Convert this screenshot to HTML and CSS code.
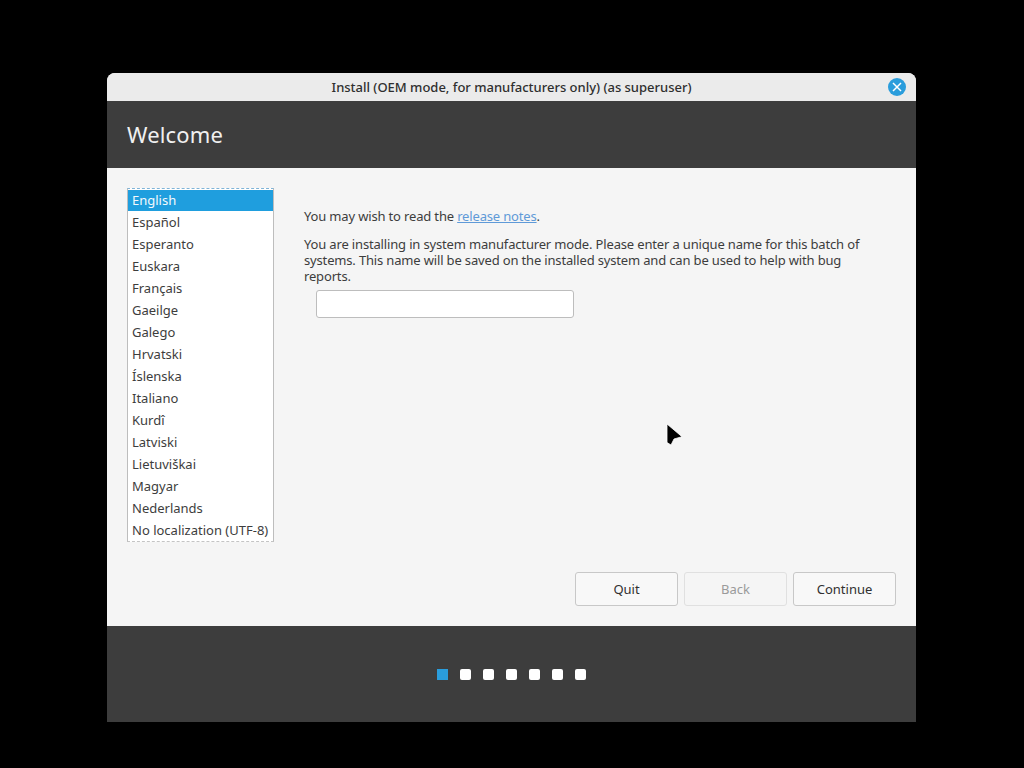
FILE: index.html
```html
<!DOCTYPE html>
<html lang="en">
<head>
<meta charset="utf-8">
<title>Install</title>
<link rel="stylesheet" href="styles.css">
</head>
<body>
<div class="window">
  <div class="titlebar">
    <span class="title">Install (OEM mode, for manufacturers only) (as superuser)</span>
    <span class="close"><svg width="10" height="10" viewBox="0 0 10 10"><path d="M1 1L9 9M9 1L1 9" stroke="#fff" stroke-width="1.5" fill="none"/></svg></span>
  </div>
  <header class="header"><h1>Welcome</h1></header>
  <main class="body">
    <div class="top">
      <ul class="langs">
        <li class="sel">English</li>
        <li>Español</li>
        <li>Esperanto</li>
        <li>Euskara</li>
        <li>Français</li>
        <li>Gaeilge</li>
        <li>Galego</li>
        <li>Hrvatski</li>
        <li>Íslenska</li>
        <li>Italiano</li>
        <li>Kurdî</li>
        <li>Latviski</li>
        <li>Lietuviškai</li>
        <li>Magyar</li>
        <li>Nederlands</li>
        <li>No localization (UTF-8)</li>
      </ul>
      <div class="content">
        <p class="notes">You may wish to read the <a href="#">release notes</a>.</p>
        <p class="desc">You are installing in system manufacturer mode. Please enter a unique name for this batch of systems. This name will be saved on the installed system and can be used to help with bug reports.</p>
        <input class="batch" type="text" aria-label="Batch name">
      </div>
    </div>
    <div class="actions">
      <button class="btn quit">Quit</button>
      <button class="btn back" disabled>Back</button>
      <button class="btn cont">Continue</button>
    </div>
  </main>
  <footer class="footer">
    <span class="dot on"></span><span class="dot"></span><span class="dot"></span><span class="dot"></span><span class="dot"></span><span class="dot"></span><span class="dot"></span>
  </footer>
</div>
<svg class="cursor" width="18" height="25" viewBox="0 0 18 25"><path d="M1 2L16 14.7L8 17L5 23L1 20.5Z" fill="#000" stroke="#fff" stroke-width="0.8"/></svg>
</body>
</html>
```
FILE: styles.css
```css
* { box-sizing: border-box; }
html, body { margin: 0; height: 100%; }
body {
  background: #000;
  font-family: "Noto Sans", "DejaVu Sans", sans-serif;
  font-size: 13px;
  color: #3d3d3d;
  padding: 73px 108px 46px 107px;
  overflow: hidden;
}
.window { width: 809px; height: 649px; display: flex; flex-direction: column; background: #f5f5f5; border-radius: 8px 8px 0 0; overflow: hidden; }
.titlebar { height: 28px; flex: none; background: #ebebeb; display: flex; align-items: center; justify-content: center; position: relative; }
.title { font-size: 13px; font-weight: 500; color: #2f2f2f; letter-spacing: -0.01px; }
.close { position: absolute; right: 10px; top: 5px; width: 18px; height: 18px; border-radius: 50%; background: #2a9ddc; display: flex; align-items: center; justify-content: center; }
.header { height: 67px; flex: none; background: #3d3d3d; display: flex; align-items: center; padding: 0 20px 2px; }
.header h1 { margin: 0; font-size: 22px; font-weight: 400; color: #f0f0f0; letter-spacing: 0.15px; }
.body { flex: 1; display: flex; flex-direction: column; padding: 20px; justify-content: space-between; }
.top { display: flex; align-items: flex-start; }
.langs { list-style: none; margin: 0; padding: 1px 0; width: 147px; height: 354px; background: #fff; border: 1px solid #bdbdbd; border-top: 1px dashed #7fb4d8; border-bottom: 1px dashed #c4c4c4; flex: none; }
.langs li { height: 22px; line-height: 21px; padding-left: 4px; white-space: nowrap; }
.langs li.sel { height: 21px; margin-bottom: 1px; background: #1f9ede; color: #f4f9fc; }
.content { margin-left: 30px; width: 565px; padding-top: 20px; }
.content p { margin: 0; line-height: 16px; letter-spacing: -0.16px; }
.content .notes { margin-bottom: 12px; }
.notes a { color: #5f9ad8; text-decoration: underline; }
.batch { display: block; margin: 6px 0 0 12px; width: 258px; height: 28px; background: #fff; border: 1px solid #bdbdbd; border-radius: 3px; }
.actions { display: flex; justify-content: flex-end; gap: 6px; }
.btn { width: 103px; height: 34px; font: inherit; color: #303030; background: #f8f8f8; border: 1px solid #c8c8c8; border-radius: 3px; padding: 0; }
.back { color: #9a9a9a; border-color: #e0e0e0; background: #f5f5f5; }
.footer { height: 96px; flex: none; background: #3d3d3d; display: flex; align-items: center; justify-content: center; gap: 12px; }
.dot { width: 11px; height: 11px; border-radius: 2px; background: #fff; }
.dot.on { background: #2a9ddc; border-radius: 0; }
.cursor { position: absolute; left: 666px; top: 422px; }
```
